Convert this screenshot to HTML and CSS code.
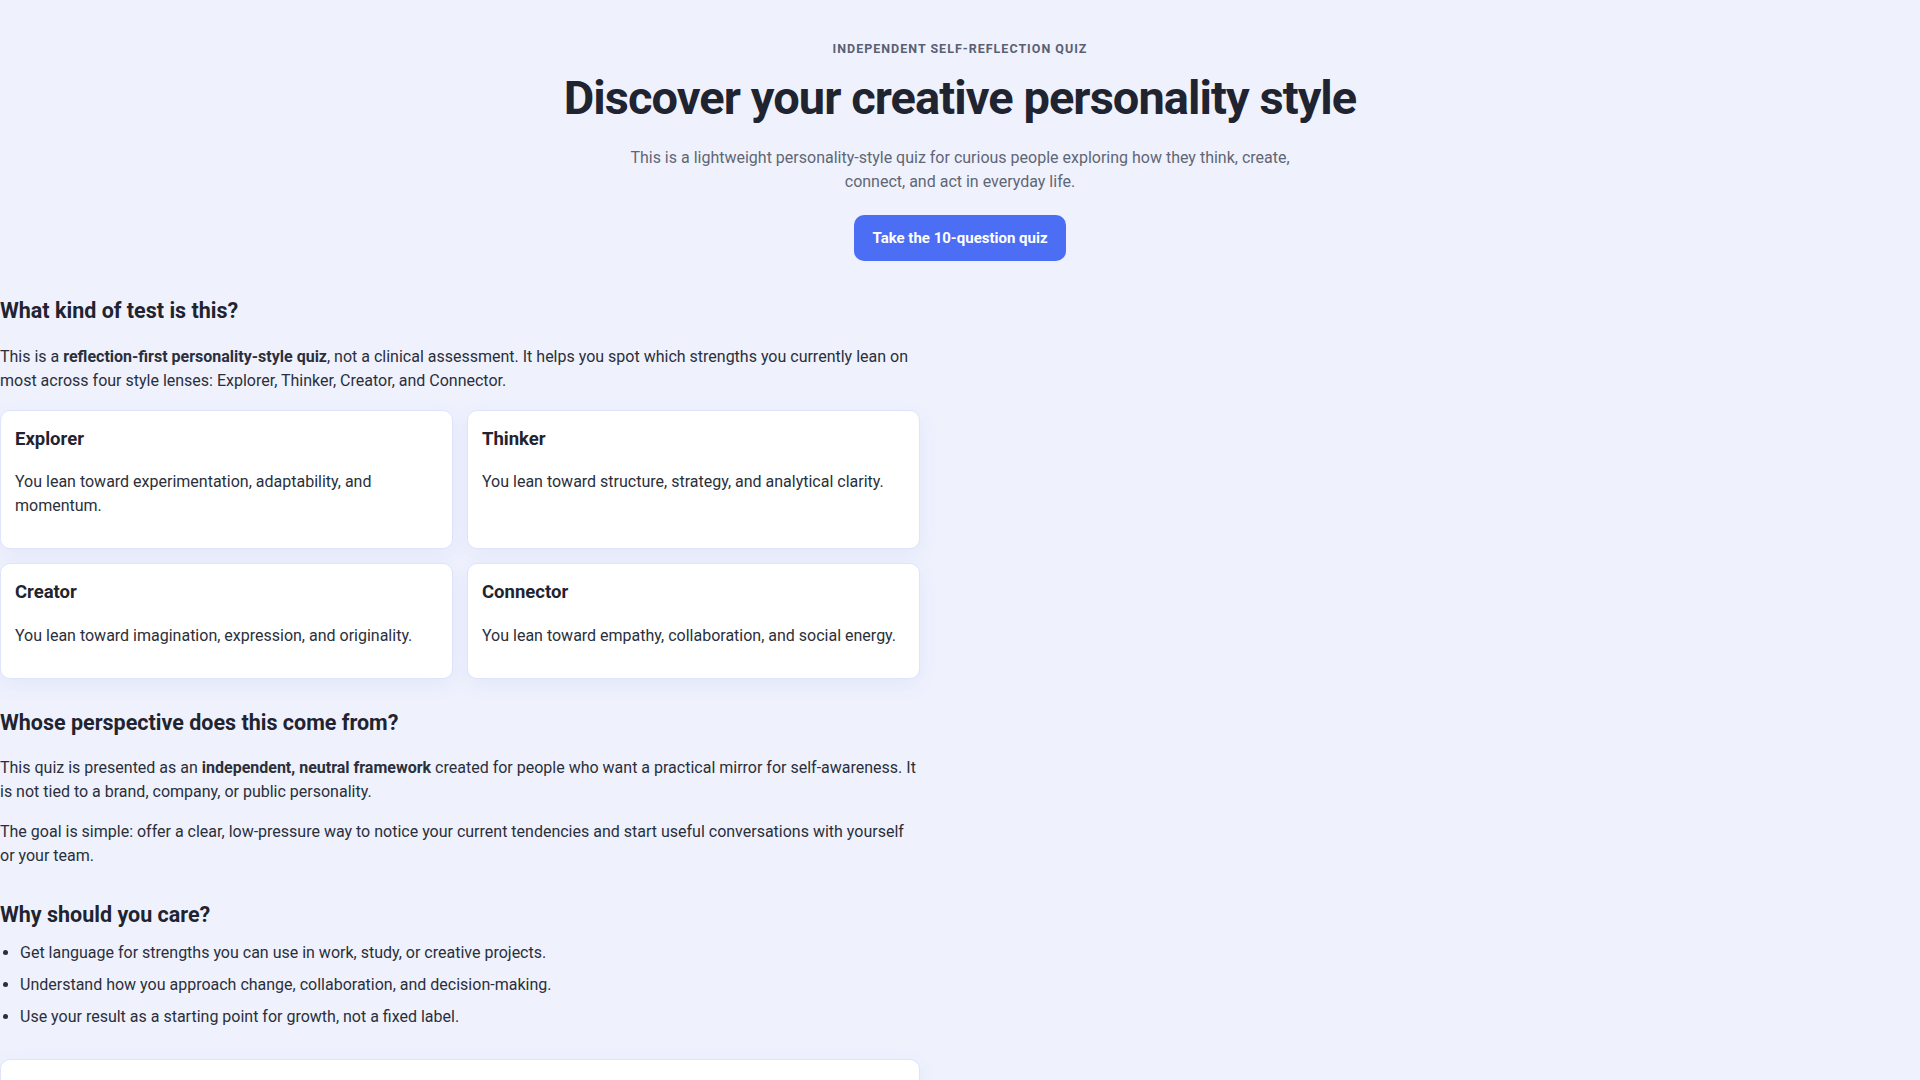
FILE: index.html
```html
<!DOCTYPE html>
<html lang="en">
<head>
  <meta charset="UTF-8" />
  <meta name="viewport" content="width=device-width, initial-scale=1.0"/>
  <title>Creative Personality Style Quiz</title>
  <link rel="stylesheet" href="styles.css">
</head>
<body>
  <header class="hero">
    <p class="eyebrow">Independent self-reflection quiz</p>
    <h1>Discover your creative personality style</h1>
    <p class="lead">This is a lightweight personality-style quiz for curious people exploring how they think, create, connect, and act in everyday life.</p>
    <button class="btn">Take the 10-question quiz</button>
  </header>

  <main class="content">
    <section>
      <h2>What kind of test is this?</h2>
      <p>This is a <strong>reflection-first personality-style quiz</strong>, not a clinical assessment. It helps you spot which strengths you currently lean on most across four style lenses: Explorer, Thinker, Creator, and Connector.</p>
      <div class="styles">
        <div class="card">
          <h3>Explorer</h3>
          <p>You lean toward experimentation, adaptability, and momentum.</p>
        </div>
        <div class="card">
          <h3>Thinker</h3>
          <p>You lean toward structure, strategy, and analytical clarity.</p>
        </div>
        <div class="card">
          <h3>Creator</h3>
          <p>You lean toward imagination, expression, and originality.</p>
        </div>
        <div class="card">
          <h3>Connector</h3>
          <p>You lean toward empathy, collaboration, and social energy.</p>
        </div>
      </div>
    </section>

    <section>
      <h2>Whose perspective does this come from?</h2>
      <p>This quiz is presented as an <strong>independent, neutral framework</strong> created for people who want a practical mirror for self-awareness. It is not tied to a brand, company, or public personality.</p>
      <p>The goal is simple: offer a clear, low-pressure way to notice your current tendencies and start useful conversations with yourself or your team.</p>
    </section>

    <section>
      <h2>Why should you care?</h2>
      <ul class="reasons">
        <li>Get language for strengths you can use in work, study, or creative projects.</li>
        <li>Understand how you approach change, collaboration, and decision-making.</li>
        <li>Use your result as a starting point for growth, not a fixed label.</li>
      </ul>
    </section>

    <section class="card quiz">
      <h3>Ready when you are</h3>
      <p>Answer ten quick questions and see which style you lean on most right now.</p>
    </section>
  </main>
</body>
</html>
```

FILE: styles.css
```css
body { margin: 0; font-family: Roboto, "Liberation Sans", sans-serif; font-size: 16px; line-height: 1.5; color: #2a2f3b; background: #eff2fd; }

.hero { text-align: center; padding: 40px 20px 3px; }
.eyebrow { margin: 0 0 12px; font-size: 12.5px; line-height: 18px; font-weight: 700; letter-spacing: 0.08em; text-transform: uppercase; color: #5a6072; }
h1 { margin: 0; font-size: 47px; line-height: 1.2; font-weight: 700; letter-spacing: -0.02em; color: #1f2430; }
.lead { max-width: 680px; margin: 20px auto 0; color: #5f6675; }
.btn { margin-top: 21px; padding: 12px 18px; border: none; border-radius: 10px; background: #4c6ef5; color: #fff; font: 700 15px/22px Roboto, "Liberation Sans", sans-serif; cursor: pointer; }

.content { max-width: 920px; }
h2 { margin: 31px 0 0; font-size: 21.5px; font-weight: 700; color: #1f2430; }
p { margin: 16px 0; }
h2 + p { margin-top: 17px; }

.styles { display: grid; grid-template-columns: 1fr 1fr; gap: 14px; margin: 17px 0 -3px; }
.card { background: #fff; border: 1px solid #dfe4fb; border-radius: 10px; padding: 15px 14px 14px; box-shadow: 0 6px 20px rgba(76, 96, 200, 0.08); }
.card h3 { margin: 0 0 17px; font-size: 18.5px; font-weight: 700; color: #1f2430; }
.card p { margin: 0 0 16px; }

.reasons { margin: 9px 0 0; padding-left: 20px; }
.reasons li { margin-bottom: 8px; }

.quiz { margin-top: 30px; padding-top: 26px; }
```
